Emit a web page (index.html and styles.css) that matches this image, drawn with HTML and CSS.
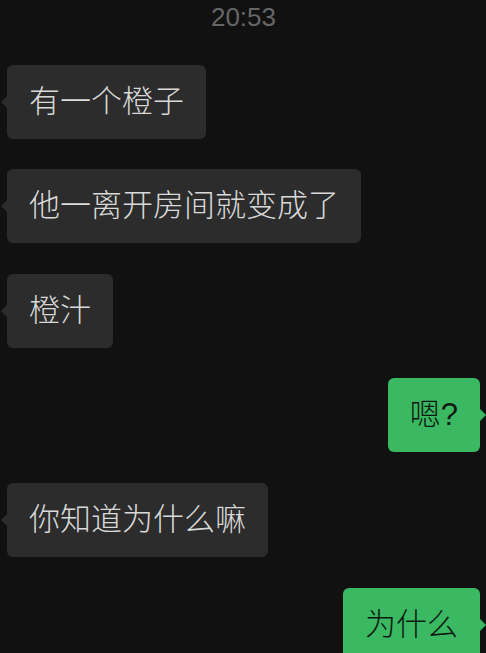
FILE: index.html
```html
<!DOCTYPE html>
<html lang="zh-CN">
<head>
    <meta charset="UTF-8">
    <meta name="viewport" content="width=device-width, initial-scale=1.0">
    <title>聊天</title>
    <link rel="stylesheet" href="styles.css">
</head>
<body>
<div class="chat">
    <div class="time">20:53</div>
    <div class="msg left"><span class="bubble">有一个橙子</span></div>
    <div class="msg left"><span class="bubble">他一离开房间就变成了</span></div>
    <div class="msg left"><span class="bubble">橙汁</span></div>
    <div class="msg right"><span class="bubble">嗯?</span></div>
    <div class="msg left"><span class="bubble">你知道为什么嘛</span></div>
    <div class="msg right"><span class="bubble">为什么</span></div>
</div>
</body>
</html>
```

FILE: styles.css
```css
html, body {
    margin: 0;
    height: 100%;
    background: #111111;
    overflow: hidden;
}
.chat {
    display: flex;
    flex-direction: column;
    gap: 30.6px;
    padding: 0 6px 0 7px;
    font-family: "Liberation Sans", "Noto Sans CJK SC", sans-serif;
}
.time {
    height: 34px;
    line-height: 34px;
    text-align: center;
    font-size: 26px;
    color: #666666;
}
.msg {
    display: flex;
}
.msg.right {
    justify-content: flex-end;
}
.bubble {
    position: relative;
    display: block;
    padding: 21px 22px;
    font-size: 31px;
    font-weight: 300;
    line-height: 32px;
    border-radius: 6px;
    white-space: nowrap;
}
.left .bubble {
    background: #2c2c2c;
    color: #d9d9d9;
}
.right .bubble {
    background: #3bb862;
    color: #0e1a10;
}
.bubble::before {
    content: "";
    position: absolute;
    top: 50%;
    margin-top: -6px;
    border-top: 6px solid transparent;
    border-bottom: 6px solid transparent;
}
.left .bubble::before {
    left: -6px;
    border-right: 6px solid #2c2c2c;
}
.right .bubble::before {
    right: -6px;
    border-left: 6px solid #3bb862;
}
```
